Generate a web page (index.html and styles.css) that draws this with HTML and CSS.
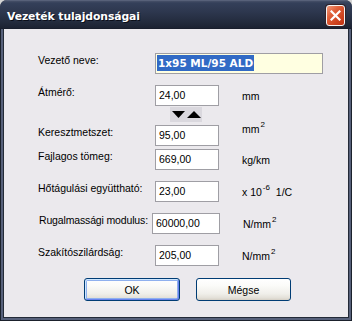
FILE: index.html
```html
<!DOCTYPE html>
<html>
<head>
  <meta charset="utf-8">
  <title>Vezeték tulajdonságai</title>
  <link rel="stylesheet" href="styles.css">
</head>
<body>
  <div class="window">
    <div class="titlebar">
      <span class="title">Vezeték tulajdonságai</span>
      <button class="close" title="Bezárás">
        <svg width="11" height="11" viewBox="0 0 11 11"><path d="M1.5 1.5 L9.5 9.5 M9.5 1.5 L1.5 9.5" stroke="#fff" stroke-width="2.2" stroke-linecap="square"/></svg>
      </button>
    </div>

    <div class="frame">
      <div class="frame-line">
        <div class="client">
          <!-- mezők -->
          <div class="row first">
            <span class="lbl">Vezető neve:</span>
            <div class="box box-name"><span class="sel">1x95 ML/95 ALD</span></div>
          </div>

          <div class="row">
            <span class="lbl">Átmérő:</span>
            <div class="box">24,00</div>
            <span class="unit">mm</span>
          </div>

          <div class="spin">
            <svg width="32" height="15" viewBox="0 0 32 15">
              <polygon points="2,4 15,4 8.5,11" fill="#000"/>
              <polygon points="17,11 31,11 24,4" fill="#000"/>
            </svg>
          </div>

          <div class="row tight">
            <span class="lbl">Keresztmetszet:</span>
            <div class="box">95,00</div>
            <span class="unit raised">mm<sup>2</sup></span>
          </div>

          <div class="row tight">
            <span class="lbl">Fajlagos tömeg:</span>
            <div class="box">669,00</div>
            <span class="unit">kg/km</span>
          </div>

          <div class="row">
            <span class="lbl">Hőtágulási együttható:</span>
            <div class="box">23,00</div>
            <span class="unit">x 10<sup>-6</sup>&nbsp;&nbsp;1/C</span>
          </div>

          <div class="row">
            <span class="lbl lbl-shift">Rugalmassági modulus:</span>
            <div class="box box-wide">60000,00</div>
            <span class="unit">N/mm<sup>2</sup></span>
          </div>

          <div class="row">
            <span class="lbl">Szakítószilárdság:</span>
            <div class="box">205,00</div>
            <span class="unit">N/mm<sup>2</sup></span>
          </div>

          <div class="buttons">
            <button class="btn btn-default">OK</button>
            <button class="btn btn-cancel">Mégse</button>
          </div>
        </div>
      </div>
    </div>
  </div>
</body>
</html>
```

FILE: styles.css
```css
*{
    box-sizing: border-box;
}

body{
    margin: 0;
    background: #d4d4d4;
    font-family: "Liberation Sans", Arial, sans-serif;
    font-size: 10.5px;
    color: #000;
}

.window{
    width: 352px;
    height: 321px;
    display: flex;
    flex-direction: column;
    border-radius: 7px 7px 0 0;
    overflow: hidden;
    background: #2b3242;
}

/* titlebar */
.titlebar{
    position: relative;
    z-index: 1;
    flex: none;
    height: 29px;
    display: flex;
    justify-content: space-between;
    align-items: flex-start;
    padding: 0 7px;
    background: linear-gradient(#68728a 0, #465068 1px, #34405a 3px, #2d374e 12px, #232b3d 22px, #1c2232 28px, #151a26 29px);
}

.title{
    margin-top: 10px;
    font-family: "DejaVu Sans", Verdana, sans-serif;
    font-weight: bold;
    font-size: 10.8px;
    line-height: 13px;
    letter-spacing: -0.1px;
    color: #fff;
    text-shadow: 1px 1px 0 #0b0f1a;
}

.close{
    width: 19px;
    height: 21px;
    margin-top: 5px;
    padding: 0;
    border: 1px solid #f4f4f4;
    border-radius: 3px;
    display: flex;
    align-items: center;
    justify-content: center;
    background: linear-gradient(135deg, #f09a7c 0, #e0603a 35%, #cf4420 70%, #c13212 100%);
    box-shadow: 0 0 0 1px #30222a;
}

/* window frame */
.frame{
    flex: 1;
    border: solid #1b212c;
    border-width: 0 1px 1px;
    background: #56607a;
    padding: 0 2px 2px;
}

.frame-line{
    height: 100%;
    border: solid #232a37;
    border-width: 0 1px 1px;
}

.client{
    height: 100%;
    background: #ebe9ed;
    padding: 24px 0 0 34px;
}

/* rows */
.row{
    display: flex;
    height: 21px;
    margin-top: 11px;
}

.row.first{
    margin-top: 0;
}

.row.tight{
    margin-top: 3px;
}

.lbl{
    width: 117px;
    flex: none;
    line-height: 13px;
    padding-top: 1px;
    white-space: nowrap;
}

.lbl-shift{
    padding-left: 1px;
    letter-spacing: -0.15px;
}

.box{
    width: 64px;
    height: 21px;
    flex: none;
    border: 1px solid #9f9ea4;
    background: #fff;
    padding: 0 3px;
    font-size: 10.5px;
    line-height: 19px;
}

.box-wide{
    width: 68px;
    margin-left: -3px;
}

.box-name{
    width: 168px;
    background: #ffffe1;
    padding: 1px 1px 0;
    line-height: 16px;
}

.sel{
    display: inline-block;
    padding: 0 1px;
    background: #316ac5;
    color: #fff;
    font-family: "DejaVu Sans", Verdana, sans-serif;
    font-weight: bold;
    font-size: 10.5px;
    line-height: 16px;
}

.unit{
    margin-left: 23px;
    line-height: 21px;
    padding-top: 1px;
}

.unit.raised{
    margin-top: -7px;
}

sup{
    font-size: 8px;
    line-height: 0;
    vertical-align: 6px;
    margin-left: 1px;
}

.spin{
    width: 32px;
    height: 15px;
    margin: 1px 0 0 132px;
    background: #dad8de;
}

.spin svg{
    display: block;
}

/* buttons */
.buttons{
    display: flex;
    gap: 16px;
    margin-top: 12px;
    padding-left: 46px;
}

.btn{
    width: 95px;
    height: 23px;
    padding: 0;
    border: 1px solid #003c74;
    border-radius: 3px;
    background: linear-gradient(#ffffff 0, #fbfbf9 30%, #f0efea 70%, #e3e0d8 90%, #d5cfc4 100%);
    font-family: "Liberation Sans", Arial, sans-serif;
    font-size: 10.5px;
    color: #000;
}

.btn-default{
    width: 96px;
    box-shadow: inset 1px 1px 0 #cee7ff, inset -1px -1px 0 #6982ee, inset 0 0 0 2px #8fb0ee;
}
```
